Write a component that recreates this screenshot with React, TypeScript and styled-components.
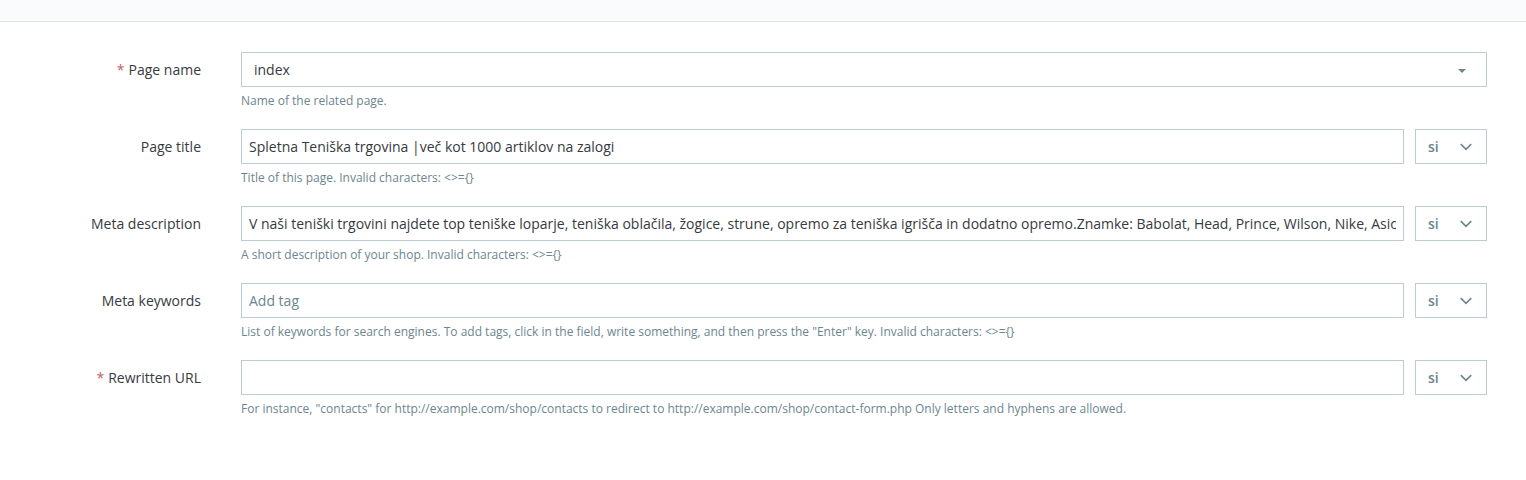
import React from "react";
import styled, { createGlobalStyle } from "styled-components";

const Global = createGlobalStyle`
  html, body { margin: 0; padding: 0; background: #fff; }
  body { font-family: "Open Sans", "Noto Sans", sans-serif; color: #363a41; }
  * { box-sizing: border-box; }
`;

const TopBar = styled.div`
  height: 22px;
  background: #fafbfc;
  border-bottom: 1px solid #dfe7ea;
`;

const Form = styled.div`
  padding: 30px 39px 0 0;
`;

const Row = styled.div`
  display: grid;
  grid-template-columns: 241px 1fr;
  margin-bottom: 19px;
`;

const Label = styled.label`
  text-align: right;
  padding-right: 40px;
  font-size: 14px;
  line-height: 35px;
  color: #363a41;
`;

const Req = styled.span`
  color: #c05c67;
  margin-right: 4px;
`;

const Field = styled.div`
  display: flex;
  flex-direction: column;
`;

const Controls = styled.div`
  display: flex;
  gap: 11px;
`;

const TextInput = styled.input`
  flex: 1;
  min-width: 0;
  height: 35px;
  border: 1px solid #bbcdd2;
  border-radius: 0;
  padding: 0 7px;
  font-family: inherit;
  font-size: 14px;
  color: #363a41;
  background: #fff;
  outline: none;
  &::placeholder { color: #6c868e; }
`;

const SelectBox = styled.div`
  flex: 1;
  height: 35px;
  border: 1px solid #bbcdd2;
  display: flex;
  align-items: center;
  justify-content: space-between;
  padding: 0 20px 0 12px;
  font-size: 14px;
  color: #363a41;
`;

const Caret = styled.span`
  width: 0;
  height: 0;
  border-left: 4px solid transparent;
  border-right: 4px solid transparent;
  border-top: 4px solid #6c868e;
  margin-top: 2px;
`;

const LangButton = styled.div`
  width: 72px;
  height: 35px;
  border: 1px solid #bbcdd2;
  display: flex;
  align-items: center;
  padding: 0 0 0 12px;
  gap: 19px;
  font-size: 14px;
  font-weight: 600;
  color: #6c868e;
  flex-shrink: 0;
`;

const Help = styled.div`
  font-size: 12px;
  line-height: 18px;
  margin-top: 5px;
  color: #6c868e;
`;

const Chevron = () => (
  <svg width="16" height="16" viewBox="0 0 24 24" fill="none">
    <path d="M5 8.5l7 7 7-7" stroke="#6c868e" strokeWidth="2.4" strokeLinecap="square" />
  </svg>
);

const Lang = () => (
  <LangButton>
    <span>si</span>
    <Chevron />
  </LangButton>
);

export default function App() {
  return (
    <>
      <Global />
      <TopBar />
      <Form>
        <Row>
          <Label><Req>*</Req>Page name</Label>
          <Field>
            <Controls>
              <SelectBox>
                <span>index</span>
                <Caret />
              </SelectBox>
            </Controls>
            <Help>Name of the related page.</Help>
          </Field>
        </Row>
        <Row>
          <Label>Page title</Label>
          <Field>
            <Controls>
              <TextInput readOnly value="Spletna Teniška trgovina |več kot 1000 artiklov na zalogi" />
              <Lang />
            </Controls>
            <Help>Title of this page. Invalid characters: &lt;&gt;={"{}"}</Help>
          </Field>
        </Row>
        <Row>
          <Label>Meta description</Label>
          <Field>
            <Controls>
              <TextInput
                readOnly
                value="V naši teniški trgovini najdete top teniške loparje, teniška oblačila, žogice, strune, opremo za teniška igrišča in dodatno opremo.Znamke: Babolat, Head, Prince, Wilson, Nike, Asics"
              />
              <Lang />
            </Controls>
            <Help>A short description of your shop. Invalid characters: &lt;&gt;={"{}"}</Help>
          </Field>
        </Row>
        <Row>
          <Label>Meta keywords</Label>
          <Field>
            <Controls>
              <TextInput readOnly placeholder="Add tag" />
              <Lang />
            </Controls>
            <Help>
              List of keywords for search engines. To add tags, click in the field, write something, and then press the "Enter" key. Invalid characters: &lt;&gt;={"{}"}
            </Help>
          </Field>
        </Row>
        <Row>
          <Label><Req>*</Req>Rewritten URL</Label>
          <Field>
            <Controls>
              <TextInput readOnly value="" />
              <Lang />
            </Controls>
            <Help>
              For instance, "contacts" for http://example.com/shop/contacts to redirect to http://example.com/shop/contact-form.php Only letters and hyphens are allowed.
            </Help>
          </Field>
        </Row>
      </Form>
    </>
  );
}
